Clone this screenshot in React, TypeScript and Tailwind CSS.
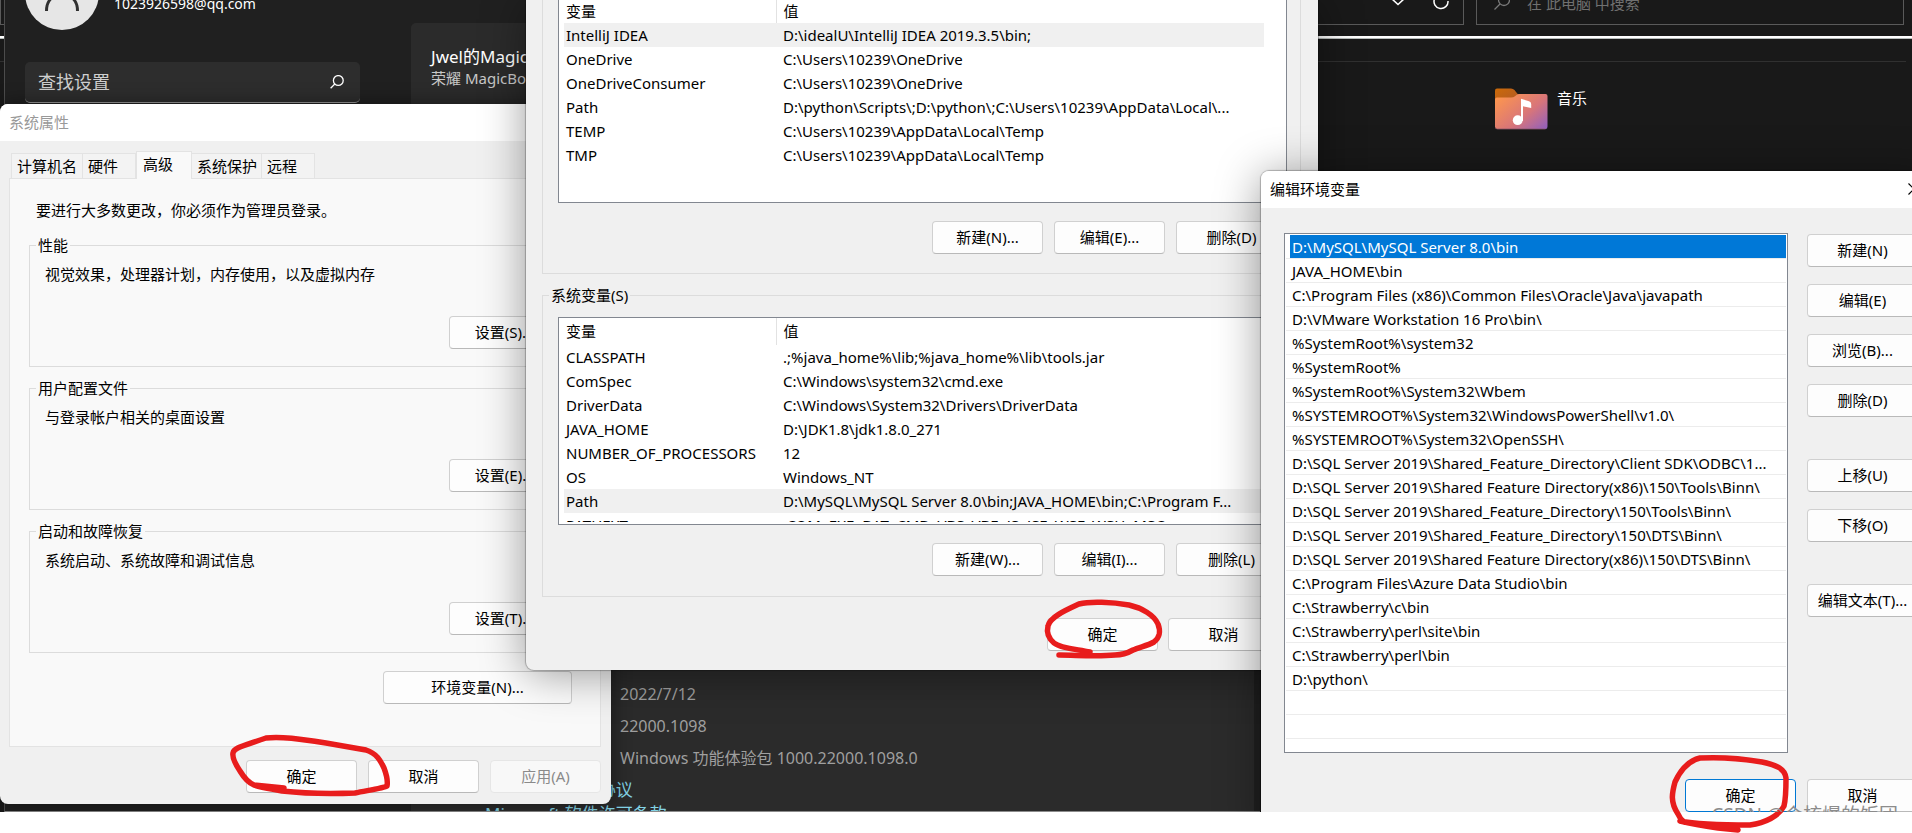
import type { ReactNode } from "react";

type Row = [name: string, value: string];

const userVariables: Row[] = [
  ["IntelliJ IDEA", "D:\\idealU\\IntelliJ IDEA 2019.3.5\\bin;"],
  ["OneDrive", "C:\\Users\\10239\\OneDrive"],
  ["OneDriveConsumer", "C:\\Users\\10239\\OneDrive"],
  ["Path", "D:\\python\\Scripts\\;D:\\python\\;C:\\Users\\10239\\AppData\\Local\\..."],
  ["TEMP", "C:\\Users\\10239\\AppData\\Local\\Temp"],
  ["TMP", "C:\\Users\\10239\\AppData\\Local\\Temp"],
];

const systemVariables: Row[] = [
  ["CLASSPATH", ".;%java_home%\\lib;%java_home%\\lib\\tools.jar"],
  ["ComSpec", "C:\\Windows\\system32\\cmd.exe"],
  ["DriverData", "C:\\Windows\\System32\\Drivers\\DriverData"],
  ["JAVA_HOME", "D:\\JDK1.8\\jdk1.8.0_271"],
  ["NUMBER_OF_PROCESSORS", "12"],
  ["OS", "Windows_NT"],
  ["Path", "D:\\MySQL\\MySQL Server 8.0\\bin;JAVA_HOME\\bin;C:\\Program F..."],
  ["PATHEXT", ".COM;.EXE;.BAT;.CMD;.VBS;.VBE;.JS;.JSE;.WSF;.WSH;.MSC"],
];

const pathEntries = [
  "D:\\MySQL\\MySQL Server 8.0\\bin",
  "JAVA_HOME\\bin",
  "C:\\Program Files (x86)\\Common Files\\Oracle\\Java\\javapath",
  "D:\\VMware Workstation 16 Pro\\bin\\",
  "%SystemRoot%\\system32",
  "%SystemRoot%",
  "%SystemRoot%\\System32\\Wbem",
  "%SYSTEMROOT%\\System32\\WindowsPowerShell\\v1.0\\",
  "%SYSTEMROOT%\\System32\\OpenSSH\\",
  "D:\\SQL Server 2019\\Shared_Feature_Directory\\Client SDK\\ODBC\\1...",
  "D:\\SQL Server 2019\\Shared Feature Directory(x86)\\150\\Tools\\Binn\\",
  "D:\\SQL Server 2019\\Shared_Feature_Directory\\150\\Tools\\Binn\\",
  "D:\\SQL Server 2019\\Shared_Feature_Directory\\150\\DTS\\Binn\\",
  "D:\\SQL Server 2019\\Shared Feature Directory(x86)\\150\\DTS\\Binn\\",
  "C:\\Program Files\\Azure Data Studio\\bin",
  "C:\\Strawberry\\c\\bin",
  "C:\\Strawberry\\perl\\site\\bin",
  "C:\\Strawberry\\perl\\bin",
  "D:\\python\\",
  "",
  "",
];

function Button({
  children,
  width = "w-[111px]",
  primary = false,
  disabled = false,
}: {
  children: ReactNode;
  width?: string;
  primary?: boolean;
  disabled?: boolean;
}) {
  const tone = disabled
    ? "border-[#e6e6e6] bg-[#f8f8f8] text-[#8a8a8a]"
    : primary
      ? "border-[#0078d4] bg-[#fdfdfd]"
      : "border-[#d0d0d0] border-b-[#b9b9b9] bg-[#fdfdfd]";
  return (
    <button
      type="button"
      disabled={disabled}
      className={`flex h-[33px] shrink-0 items-center justify-center rounded-[4px] border pb-[2px] whitespace-nowrap ${width} ${tone}`}
    >
      {children}
    </button>
  );
}

function VariableTable({ rows, selected, headHeight }: { rows: Row[]; selected: number; headHeight: string }) {
  return (
    <table className="ml-[5px] w-[700px] table-fixed border-collapse text-left">
      <thead>
        <tr className={headHeight}>
          <th className="w-[212px] border-r border-[#e2e2e2] p-0 pb-[2px] pl-[2px] font-normal">变量</th>
          <th className="p-0 pb-[2px] pl-[7px] font-normal">值</th>
        </tr>
      </thead>
      <tbody>
        {rows.map(([name, value], i) => (
          <tr key={name} className={i === selected ? "h-6 bg-[#f0f0f0]" : "h-6"}>
            <td className="p-0 pl-[2px] whitespace-nowrap">{name}</td>
            <td className="p-0 pl-[7px] whitespace-nowrap">{value}</td>
          </tr>
        ))}
      </tbody>
    </table>
  );
}

function Explorer() {
  return (
    <section className="flex h-full flex-col bg-[#191919]">
      <div className="flex h-[36px] items-start gap-[12px] pr-[8px]">
        <div className="flex h-[25px] flex-1 justify-end gap-[29px] border border-t-0 border-[#5a5a5a] pr-[14px]">
          <svg className="h-[12px] w-[12px]" fill="none" stroke="#fff" strokeWidth="1.6" aria-hidden="true">
            <path d="M0 -1 6 4.5 12 -1" />
          </svg>
          <svg className="h-[12px] w-[16px]" fill="none" stroke="#fff" strokeWidth="1.5" aria-hidden="true">
            <path d="M1.5 -1A7 7 0 1 0 15 1" />
          </svg>
        </div>
        <label className="flex h-[25px] w-[428px] overflow-hidden border border-t-0 border-[#5a5a5a] pl-[17px]">
          <svg className="h-[12px] w-[16px]" fill="none" stroke="#7a7a7a" strokeWidth="1.3" aria-hidden="true">
            <circle cx="10" cy="0" r="5.5" />
            <path d="M6 4 .5 9.5" />
          </svg>
          <input
            aria-label="搜索"
            placeholder="在 此电脑 中搜索"
            className="-mt-[9px] ml-[17px] h-6 flex-1 bg-transparent outline-none placeholder:text-[#707070]"
          />
        </label>
      </div>
      <div className="h-[3px] border-b border-[#b8bdbb] bg-white" />
      <div className="mr-[6px] h-[23px] border-b border-[#303030]" />
      <div className="mr-[325px] flex justify-end gap-[9px] pt-[26px] text-white">
        <svg viewBox="0 0 54 42" className="h-[42px] w-[54px]" aria-hidden="true">
          <defs>
            <linearGradient id="folder" x1="0" y1="0.2" x2="1" y2="1">
              <stop offset="0" stopColor="#fb9450" />
              <stop offset="0.55" stopColor="#d8757a" />
              <stop offset="1" stopColor="#8f60c0" />
            </linearGradient>
            <linearGradient id="tab" x1="0" y1="0" x2="1" y2="1">
              <stop offset="0" stopColor="#cc6a08" />
              <stop offset="1" stopColor="#b05a28" />
            </linearGradient>
          </defs>
          <path d="M1 2.5Q1 .5 3 .5H17Q19 .5 20.5 2L24 6.5V14H1z" fill="url(#tab)" />
          <path d="M1 11.5Q1 9.5 3 9.5H17Q19.5 9.5 21 8.2L22.5 7Q23.5 6 25 6H51.5Q53.5 6 53.5 8V38.5Q53.5 41 51.5 41H3Q1 41 1 38.5z" fill="url(#folder)" />
          <path d="M1.5 39.5Q2 41 3.5 41H51.5" fill="none" stroke="#8a5568" strokeWidth=".8" />
          <circle cx="23.7" cy="32.2" r="4.9" fill="#fff" />
          <path d="M27 33V10.8L35 13.2Q37.2 14 37.2 16V20L29 18.3V33z" fill="#fff" />
        </svg>
        <span className="leading-5">音乐</span>
      </div>
    </section>
  );
}

function SettingsWindow() {
  return (
    <section className="absolute inset-y-0 left-[4px] flex w-[1256px] overflow-hidden border-b border-l border-[#4c4c4c] border-b-[#8c8c8c] bg-[#202020] pr-[6px] text-white">
      <div className="w-[406px] shrink-0 pl-[20px]">
        <div className="flex h-[30px] gap-[15px]">
          <div className="flex h-[30px] w-[74px] items-end overflow-hidden">
            <svg viewBox="0 0 74 30" className="h-[30px] w-[74px]" aria-hidden="true">
              <circle cx="37" cy="-7" r="37" fill="#e6e6e6" />
              <path d="M21.5 11C21.5 0 28 -5 37 -5S52.5 0 52.5 11" fill="none" stroke="#303030" strokeWidth="3" />
            </svg>
          </div>
          <span className="-mt-[6px] text-sm leading-5">1023926598@qq.com</span>
        </div>
        <label className="mt-[32px] flex h-[41px] w-[335px] items-center justify-between rounded-[5px] border-b border-[#9a9a9a] bg-[#2d2d2d] pr-[16px] pb-px pl-[13px]">
          <input
            aria-label="查找设置"
            placeholder="查找设置"
            className="w-[240px] bg-transparent text-lg leading-7 outline-none placeholder:text-[#cfcfcf]"
          />
          <svg viewBox="0 0 14 14" className="h-[14px] w-[14px]" fill="none" stroke="#fff" strokeWidth="1.3" aria-hidden="true">
            <circle cx="8.3" cy="5.5" r="4.9" />
            <path d="M4.8 9 .6 13.3" />
          </svg>
        </label>
      </div>
      <div className="mt-[23px] flex flex-1 flex-col justify-between rounded-t-[5px] bg-[#2b2b2b]">
        <div className="pt-[22px] pl-[20px]">
          <h2 className="text-[17px] leading-6">Jwel的MagicBook</h2>
          <p className="leading-[18px] text-[#c8c8c8]">荣耀 MagicBook</p>
        </div>
        <div className="h-[133px] overflow-hidden pl-[74px] text-[17px]">
          <ul className="pl-[135px] text-base leading-8 text-[#9f9f9f]">
            <li>2022/7/12</li>
            <li>22000.1098</li>
            <li>Windows 功能体验包 1000.22000.1098.0</li>
          </ul>
          <a href="#services" className="block leading-8 text-[#83d4e6]">Microsoft 服务协议</a>
          <a href="#license" className="block leading-4 text-[#83d4e6]">Microsoft 软件许可条款</a>
        </div>
      </div>
    </section>
  );
}

function Group({ title, text, button }: { title: string; text: string; button: string }) {
  return (
    <fieldset className="h-[132px] border border-[#dcdcdc]">
      <legend className="ml-[6px] px-[2px]">{title}</legend>
      <div className="flex flex-col pt-[9px] pr-[20px] pl-[15px]">
        <p>{text}</p>
        <div className="mt-[32px] flex justify-end">
          <Button>{button}</Button>
        </div>
      </div>
    </fieldset>
  );
}

const tabs = [
  { label: "计算机名", width: "w-[72px]" },
  { label: "硬件", width: "w-[53px]" },
  { label: "高级", width: "w-[56px]", active: true },
  { label: "系统保护", width: "w-[70px]" },
  { label: "远程", width: "w-[53px]" },
];

function SystemProperties() {
  return (
    <section className="absolute top-[104px] left-0 w-[611px] overflow-hidden rounded-[8px] bg-[#f0f0f0] shadow-[0_0_20px_rgba(0,0,0,0.45)]">
      <h1 className="flex h-[37px] items-center bg-white pb-[2px] pl-[9px] text-[#999]">系统属性</h1>
      <div className="pt-[10px] pr-[10px] pb-[11px] pl-[9px]">
        <div role="tablist" className="flex h-[27px] items-end pl-[2px]">
          {tabs.map((tab) => (
            <button
              key={tab.label}
              type="button"
              role="tab"
              aria-selected={!!tab.active}
              className={
                tab.active
                  ? `relative -mb-px h-7 border border-b-0 border-[#e3e3e3] bg-[#f9f9f9] pb-[4px] pl-[6px] text-left ${tab.width}`
                  : `h-[25px] border border-b-0 border-l-0 border-[#e3e3e3] bg-[#f3f3f3] pl-[5px] text-left whitespace-nowrap first:border-l ${tab.width}`
              }
            >
              {tab.label}
            </button>
          ))}
        </div>
        <div className="flex flex-col gap-[11px] border border-[#e3e3e3] bg-[#f9f9f9] px-[19px] pt-[21px] pb-[42px]">
          <p className="mb-[4px] pl-[7px]">要进行大多数更改，你必须作为管理员登录。</p>
          <Group title="性能" text="视觉效果，处理器计划，内存使用，以及虚拟内存" button="设置(S)..." />
          <Group title="用户配置文件" text="与登录帐户相关的桌面设置" button="设置(E)..." />
          <Group title="启动和故障恢复" text="系统启动、系统故障和调试信息" button="设置(T)..." />
          <div className="flex justify-end pt-[7px] pr-[9px]">
            <Button width="w-[189px]">环境变量(N)...</Button>
          </div>
        </div>
        <div className="flex justify-end gap-[11px] pt-[13px]">
          <Button>确定</Button>
          <Button>取消</Button>
          <Button disabled>应用(A)</Button>
        </div>
      </div>
    </section>
  );
}

function EnvironmentVariables() {
  return (
    <section className="absolute top-0 left-[526px] w-[792px] rounded-b-[8px] bg-[#f0f0f0] pr-[17px] pb-[19px] pl-[16px] shadow-[0_0_1px_1px_rgba(0,0,0,0.25),0_4px_45px_rgba(0,0,0,0.4)]">
      <div className="border border-t-0 border-[#dcdcdc] pr-[13px] pb-[19px] pl-[15px]">
        <div className="h-[203px] border border-t-0 border-[#828790] bg-white">
          <VariableTable rows={userVariables} selected={0} headHeight="h-[23px]" />
        </div>
        <div className="mt-[18px] flex justify-end gap-[11px]">
          <Button>新建(N)...</Button>
          <Button>编辑(E)...</Button>
          <Button>删除(D)</Button>
        </div>
      </div>
      <fieldset className="mt-[11px] border border-[#dcdcdc]">
        <legend className="ml-[6px] px-[2px]">系统变量(S)</legend>
        <div className="pt-[12px] pr-[13px] pb-[20px] pl-[15px]">
          <div className="border border-[#828790] bg-white pb-[2px]">
            <div className="h-[204px] overflow-hidden">
              <VariableTable rows={systemVariables} selected={6} headHeight="h-[27px]" />
            </div>
          </div>
          <div className="mt-[18px] flex justify-end gap-[11px]">
            <Button>新建(W)...</Button>
            <Button>编辑(I)...</Button>
            <Button>删除(L)</Button>
          </div>
        </div>
      </fieldset>
      <div className="mt-[21px] flex justify-end gap-[10px] pr-[22px]">
        <Button>确定</Button>
        <Button>取消</Button>
      </div>
    </section>
  );
}

function EditVariable() {
  return (
    <section className="absolute top-[171px] left-[1261px] w-[674px] rounded-[8px] bg-[#f0f0f0] shadow-[0_0_1px_1px_rgba(0,0,0,0.25),0_4px_45px_rgba(0,0,0,0.4)]">
      <div className="flex h-[37px] items-center justify-between rounded-t-[8px] bg-white pr-[15px] pb-[2px] pl-[9px]">
        <h1>编辑环境变量</h1>
        <button type="button" aria-label="关闭">
          <svg viewBox="0 0 12 12" className="h-[12px] w-[12px]" stroke="#000" strokeWidth="1.2" aria-hidden="true">
            <path d="M.5.5l11 11M11.5.5l-11 11" />
          </svg>
        </button>
      </div>
      <div className="pt-[25px] pr-[17px] pb-[30px] pl-[23px]">
        <div className="flex justify-between">
          <ul className="h-[520px] w-[504px] overflow-hidden border border-[#828790] bg-white px-px pt-px">
            {pathEntries.map((entry, i) => (
              <li key={i} className="flex h-6 border-b border-[#ececec] pl-[4px]">
                <span
                  className={
                    i === 0
                      ? "h-[23px] flex-1 bg-[#0078d7] pl-[2px] leading-[25px] whitespace-nowrap text-white"
                      : "h-[23px] flex-1 pl-[2px] leading-[25px] whitespace-nowrap"
                  }
                >
                  {entry}
                </span>
              </li>
            ))}
          </ul>
          <div className="flex flex-col gap-[42px] pt-px">
            <div className="flex flex-col gap-[17px]">
              <Button>新建(N)</Button>
              <Button>编辑(E)</Button>
              <Button>浏览(B)...</Button>
              <Button>删除(D)</Button>
            </div>
            <div className="flex flex-col gap-[17px]">
              <Button>上移(U)</Button>
              <Button>下移(O)</Button>
            </div>
            <Button>编辑文本(T)...</Button>
          </div>
        </div>
        <div className="mt-[26px] flex justify-end gap-[11px]">
          <Button primary>确定</Button>
          <Button>取消</Button>
        </div>
      </div>
    </section>
  );
}

function Markings() {
  return (
    <svg
      className="pointer-events-none absolute inset-0 h-full w-full"
      fill="none"
      stroke="#e81c1c"
      strokeWidth="5.5"
      strokeLinecap="round"
      strokeLinejoin="round"
      aria-hidden="true"
    >
      <path d="M284 788 254 785C247 782 243 776 240 771C236 765 232 758 233 753C234 748 240 747 266 738C280 736 300 739 326 743L366 750C378 754 381 762 384 768C387 776 388 781 387 786C384 788 370 790 355 793C330 794 300 793 282 791C272 789 262 788 254 785" />
      <path d="M1090 652C1075 649 1060 648 1054 643C1047 637 1047 630 1048 626C1050 617 1066 610 1079 604C1090 601 1112 602 1129 605C1142 608 1154 615 1158 624C1161 632 1160 637 1154 642C1147 646 1139 647 1133 650C1126 654 1122 655 1115 655C1096 657 1076 655 1059 655" />
      <path d="M1738 830 1718 828C1704 826 1692 824 1680 821C1700 825 1726 825 1750 825C1765 823 1779 816 1784 806C1786 798 1786 786 1786 778C1785 769 1777 765 1762 762C1745 759 1720 757 1700 758C1688 761 1680 771 1675 782C1672 793 1670 802 1678 814Q1680 819 1684 822" />
    </svg>
  );
}

export default function App() {
  return (
    <main className="relative flex h-screen flex-col overflow-hidden bg-white pb-[21px] font-['Noto_Sans','Noto_Sans_CJK_SC',sans-serif] text-[15px] leading-5 text-black">
      <div className="relative flex-1 overflow-hidden">
        <Explorer />
        <SettingsWindow />
        <SystemProperties />
        <EnvironmentVariables />
        <EditVariable />
      </div>
      <Markings />
      <div className="pointer-events-none absolute right-[14px] bottom-[21px] h-[9px] overflow-hidden text-[19px] leading-6 whitespace-nowrap text-[#8c8c8c]">
        CSDN @会核爆的饭团
      </div>
    </main>
  );
}
